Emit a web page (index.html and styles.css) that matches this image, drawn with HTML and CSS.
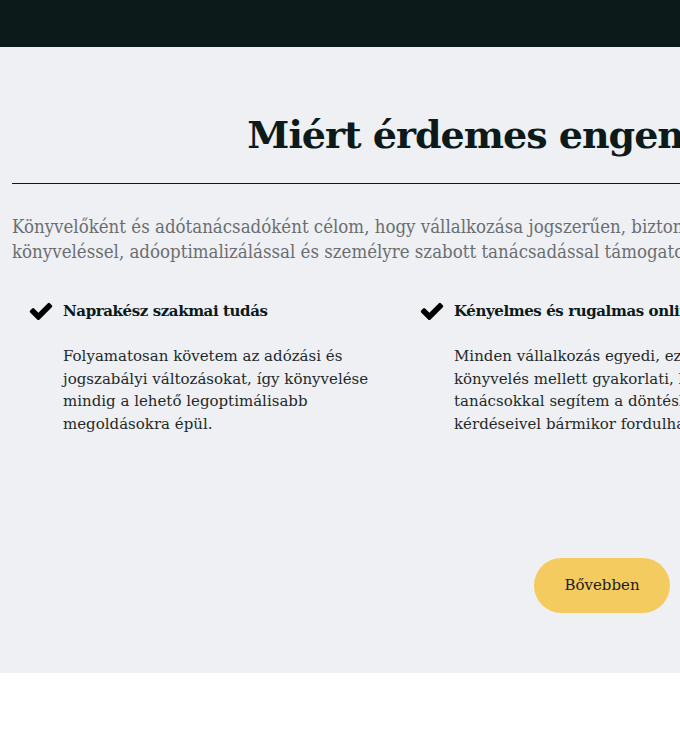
FILE: index.html
```html
<!DOCTYPE html>
<html lang="hu">
<head>
    <meta charset="UTF-8">
    <meta name="viewport" content="width=device-width, initial-scale=1.0">
    <title>Könyvelés és adótanácsadás</title>
    <link rel="stylesheet" href="styles.css">
</head>
<body>
    <header class="topbar"></header>

    <!-- Why choose me section -->
    <section class="why">
        <div class="container">
            <h2 class="why-title">Miért érdemes engem választania?</h2>
            <hr class="divider">
            <p class="lead">
                Könyvelőként és adótanácsadóként célom, hogy vállalkozása jogszerűen, biztonságosan és átláthatóan működjön, ezért precíz<br>
                könyveléssel, adóoptimalizálással és személyre szabott tanácsadással támogatom a mindennapi működését.
            </p>

            <div class="features">
                <div class="feature">
                    <div class="feature-head">
                        <svg class="check" viewBox="0 0 1792 1792"><path d="M1671 566q0 40-28 68l-724 724-136 136q-28 28-68 28t-68-28l-136-136-362-362q-28-28-28-68t28-68l136-136q28-28 68-28t68 28l294 295 656-657q28-28 68-28t68 28l136 136q28 28 28 68z"/></svg>
                        <h3>Naprakész szakmai tudás</h3>
                    </div>
                    <p>Folyamatosan követem az adózási és jogszabályi változásokat, így könyvelése mindig a lehető legoptimálisabb megoldásokra épül.</p>
                </div>
                <div class="feature">
                    <div class="feature-head">
                        <svg class="check" viewBox="0 0 1792 1792"><path d="M1671 566q0 40-28 68l-724 724-136 136q-28 28-68 28t-68-28l-136-136-362-362q-28-28-28-68t28-68l136-136q28-28 68-28t68 28l294 295 656-657q28-28 68-28t68 28l136 136q28 28 28 68z"/></svg>
                        <h3>Kényelmes és rugalmas online elérés</h3>
                    </div>
                    <p>Minden vállalkozás egyedi, ezért a pontos könyvelés mellett gyakorlati, közérthető tanácsokkal segítem a döntéshozatalt, és kérdéseivel bármikor fordulhat hozzám.</p>
                </div>
                <div class="feature">
                    <div class="feature-head">
                        <svg class="check" viewBox="0 0 1792 1792"><path d="M1671 566q0 40-28 68l-724 724-136 136q-28 28-68 28t-68-28l-136-136-362-362q-28-28-28-68t28-68l136-136q28-28 68-28t68 28l294 295 656-657q28-28 68-28t68 28l136 136q28 28 28 68z"/></svg>
                        <h3>Átlátható együttműködés</h3>
                    </div>
                    <p>Világos árazás, pontos határidők és folyamatos kommunikáció, hogy Ön nyugodtan a vállalkozására koncentrálhasson.</p>
                </div>
            </div>

            <div class="actions">
                <a class="btn" href="#">Bővebben</a>
            </div>
        </div>
    </section>

    <footer class="page-end"></footer>
</body>
</html>
```

FILE: styles.css
```css
body {
    margin: 0;
    padding: 0;
    font-family: "DejaVu Serif", "Liberation Serif", serif;
    background-color: #fff;
    color: #0c1a1a;
    overflow-x: hidden;
}

.topbar {
    height: 47px;
    background-color: #0c1a1a;
}

/* Why choose me */
.why {
    background-color: #eef0f4;
    padding: 60px 0 60px;
    width: 1204px;
}

.container {
    width: 1180px;
    margin: 0 12px;
}

.why-title {
    margin: 0;
    text-align: center;
    font-size: 38px;
    line-height: 56px;
    letter-spacing: -1px;
    font-weight: bold;
    color: #0c1a1a;
}

.divider {
    border: 0;
    border-top: 1px solid #0c1a1a;
    margin: 20px 0 30px;
}

.lead {
    margin: 0;
    font-family: "DejaVu Serif Condensed", "DejaVu Serif", serif;
    font-size: 18.5px;
    line-height: 25px;
    color: #6b6e70;
}

/* Feature list */
.features {
    display: grid;
    grid-template-columns: repeat(3, 1fr);
    column-gap: 25px;
    padding: 0 16px;
    margin-top: 34px;
}

.feature-head {
    display: flex;
    align-items: center;
    gap: 9px;
}

.check {
    width: 26px;
    height: 26px;
    flex-shrink: 0;
    fill: #000;
}

.feature h3 {
    margin: 0;
    font-size: 15px;
    line-height: 22px;
    letter-spacing: -0.4px;
    font-weight: bold;
}

.feature p {
    margin: 21px 0 0 35px;
    font-size: 15px;
    line-height: 22.5px;
    color: #1f2a2a;
}

.actions {
    display: flex;
    justify-content: center;
    margin-top: 123px;
}

.btn {
    display: inline-block;
    padding: 16px 30px;
    border-radius: 28px;
    background-color: #f4cb5e;
    color: #1c1c1c;
    font-size: 15px;
    line-height: 23px;
    text-decoration: none;
}

.page-end {
    height: 60px;
}
```
